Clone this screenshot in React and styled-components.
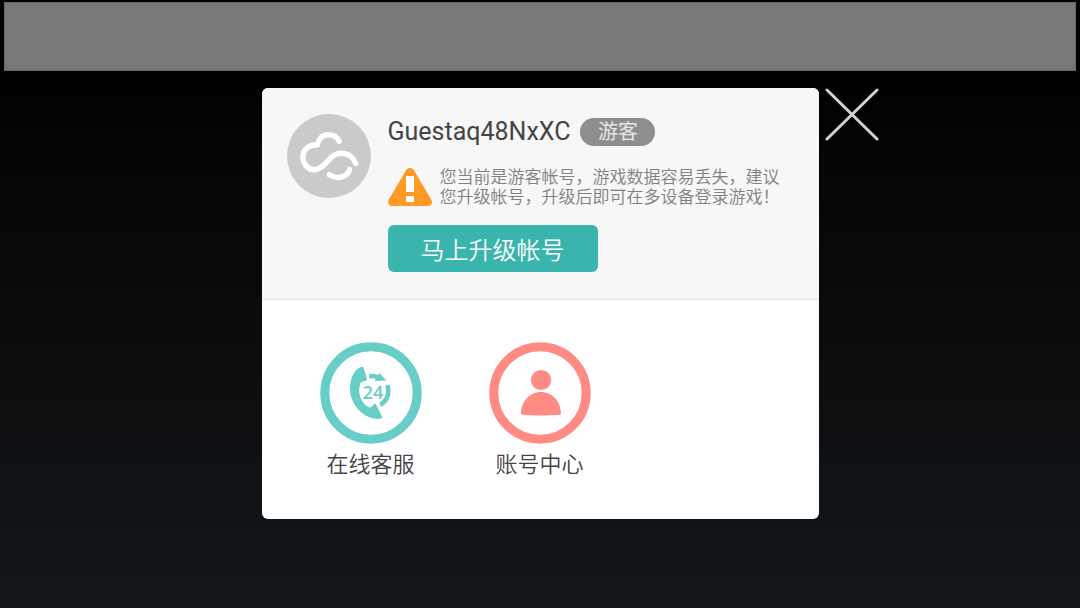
import React from 'react';
import styled, { createGlobalStyle } from 'styled-components';

const GlobalStyle = createGlobalStyle`
  * {
    box-sizing: border-box;
  }
  body {
    margin: 0;
    background: #000;
    font-family: Roboto, "Noto Sans CJK SC", sans-serif;
  }
  button {
    font-family: inherit;
    border: 0;
    padding: 0;
    background: none;
    cursor: pointer;
  }
  svg {
    display: block;
  }
`;

const Page = styled.div`
  display: flex;
  flex-direction: column;
  gap: 17px;
  min-height: 100vh;
  padding: 2px 4px;
  background: linear-gradient(#000 12%, #040506 25%, #0c0d0f 60%, #12171a 100%);
`;

const TopBar = styled.div`
  height: 69px;
  background: #7a7a7a;
  border: 1px solid #686868;
  box-shadow: inset 0 0 4px #707070;
`;

const Dialog = styled.main`
  position: relative;
  width: 100%;
  max-width: 557px;
  margin: 0 auto;
  background: #fff;
  border-radius: 6px;
`;

const CloseButton = styled.button`
  position: absolute;
  top: 0;
  left: 100%;
  margin-left: 6px;
`;

const Profile = styled.section`
  display: flex;
  align-items: flex-start;
  gap: 17px;
  padding: 26px 25px 27px;
  background: #f7f7f7;
  border-bottom: 1px solid #e4e4e4;
  border-radius: 6px 6px 0 0;
`;

const Details = styled.div`
  display: flex;
  flex-direction: column;
  align-items: flex-start;
`;

const NameRow = styled.div`
  display: flex;
  align-items: center;
  gap: 10px;
`;

const UserName = styled.h1`
  margin: 0;
  font-size: 25px;
  font-weight: 400;
  line-height: 36px;
  color: #444;
`;

const Badge = styled.span`
  width: 75px;
  border-radius: 14px;
  background: #8e8e8e;
  color: #e6e6e6;
  font-size: 20px;
  line-height: 28px;
  text-align: center;
`;

const Warning = styled.div`
  display: flex;
  align-items: center;
  gap: 8px;
  margin-top: 17px;
`;

const WarningText = styled.p`
  margin: 0;
  font-size: 17px;
  font-weight: 350;
  line-height: 20px;
  color: #808080;
`;

const UpgradeButton = styled.button`
  width: 210px;
  height: 47px;
  margin-top: 18px;
  border-radius: 6px;
  background: #3ab5ae;
  color: #fff;
  font-size: 24px;
  font-weight: 350;
`;

const Menu = styled.nav`
  display: flex;
  gap: 67px;
  padding: 42px 58px 37px;
`;

const MenuItem = styled.button`
  display: flex;
  flex-direction: column;
  align-items: center;
  gap: 4px;
  width: 102px;
  color: #444;
  font-size: 22px;
  font-weight: 350;
  line-height: 34px;
`;

const Digits = styled.text`
  font: 600 18px "Open Sans", sans-serif;
  text-anchor: middle;
`;

function CloudLogo() {
  return (
    <svg width="84" height="84" viewBox="0 0 84 84" fill="none" aria-hidden="true">
      <circle cx="42" cy="42" r="42" fill="#cacaca" />
      <g stroke="#fff" strokeWidth="5.4" strokeLinecap="round" strokeLinejoin="round">
        <path d="M52.3 27.3C50 22.8 45.8 20.8 41.3 20.8C35.6 20.8 31.5 24.8 30.4 30.8C21.8 30.3 15.9 35.9 15.9 43C15.9 50.2 21.1 55.7 27.4 55.7C39 55.7 41.6 39.2 54 39.2C61 39.2 66.4 43.3 68.6 49.2" />
        <path d="M42.3 60.7C50.3 66 60.8 63 62.6 55.6" />
      </g>
    </svg>
  );
}

function WarningIcon() {
  return (
    <svg width="44" height="38" viewBox="0 0 44 38" aria-hidden="true">
      <path d="M18.2 2C20.2-.6 23.8-.6 25.8 2L43.2 31.6C45 35 43.4 38 40 38H4C.6 38-1 35 .8 31.6Z" fill="#ff9a27" />
      <path d="M18 8H26V24H18ZM18 28H26V34H18Z" fill="#fff" />
    </svg>
  );
}

function CloseIcon() {
  return (
    <svg width="54" height="54" viewBox="0 0 54 54" aria-hidden="true">
      <path d="M2 2L52 51M52 2L2 51" stroke="#d2d2d2" strokeWidth="3" strokeLinecap="round" />
    </svg>
  );
}

function ServiceIcon() {
  return (
    <svg width="102" height="102" viewBox="0 0 102 102" fill="#68cdc7" aria-hidden="true">
      <circle cx="51" cy="51" r="46.2" fill="none" stroke="#68cdc7" strokeWidth="9" />
      <path d="M41.5 24.8C42.5 24.4 43.3 24.7 43.5 25.7L47 36.9C47.2 37.9 46.8 38.4 45.8 38.6L40.5 40.4C38.6 45.9 38.8 51.9 40.8 56.6C43 61.4 46.5 64.6 50.4 65.7L54.2 62C55 61.4 55.6 61.7 56 62.5L62 74.6C62.3 75.7 61.9 76.4 60.8 76.6C57.5 77.2 54 76.9 50.2 75.5C38.5 71.2 30 59.2 30 46.9C30 36 34.3 27.6 41.5 24.8Z" />
      <path d="M49.2 31.8C52.6 31.6 55.6 32 58.4 33.2L59.2 30.8L66.4 38.6L54.6 38.9L56 36.9C53.8 36.3 51.6 36.1 49 36.3Z" />
      <path d="M65.2 43.4L69.8 43C72.3 52.4 69 61.2 61 65L59.3 60.6C65.2 57.2 67.3 50.8 65.2 43.4Z" />
      <Digits x="53" y="57">24</Digits>
    </svg>
  );
}

function AccountIcon() {
  return (
    <svg width="102" height="102" viewBox="0 0 102 102" fill="#ff8b84" aria-hidden="true">
      <circle cx="51" cy="51" r="46.2" fill="none" stroke="#ff8b84" strokeWidth="9" />
      <circle cx="52" cy="38" r="10.1" />
      <path d="M32 70.8C32.6 58.6 41.2 49.9 52 49.9C62.8 49.9 71.4 58.6 72 70.8C72 72.2 71.4 72.6 70 72.7C58 73.6 46 73.6 34 72.7C32.6 72.6 32 72.2 32 70.8Z" />
    </svg>
  );
}

const menuItems = [
  { label: '在线客服', Icon: ServiceIcon },
  { label: '账号中心', Icon: AccountIcon },
];

export default function App() {
  return (
    <Page>
      <GlobalStyle />
      <TopBar />
      <Dialog>
        <Profile>
          <CloudLogo />
          <Details>
            <NameRow>
              <UserName>Guestaq48NxXC</UserName>
              <Badge>游客</Badge>
            </NameRow>
            <Warning>
              <WarningIcon />
              <WarningText>
                您当前是游客帐号，游戏数据容易丢失，建议
                <br />
                您升级帐号，升级后即可在多设备登录游戏！
              </WarningText>
            </Warning>
            <UpgradeButton type="button">马上升级帐号</UpgradeButton>
          </Details>
        </Profile>
        <Menu>
          {menuItems.map(({ label, Icon }) => (
            <MenuItem key={label} type="button">
              <Icon />
              {label}
            </MenuItem>
          ))}
        </Menu>
        <CloseButton type="button" aria-label="关闭">
          <CloseIcon />
        </CloseButton>
      </Dialog>
    </Page>
  );
}
